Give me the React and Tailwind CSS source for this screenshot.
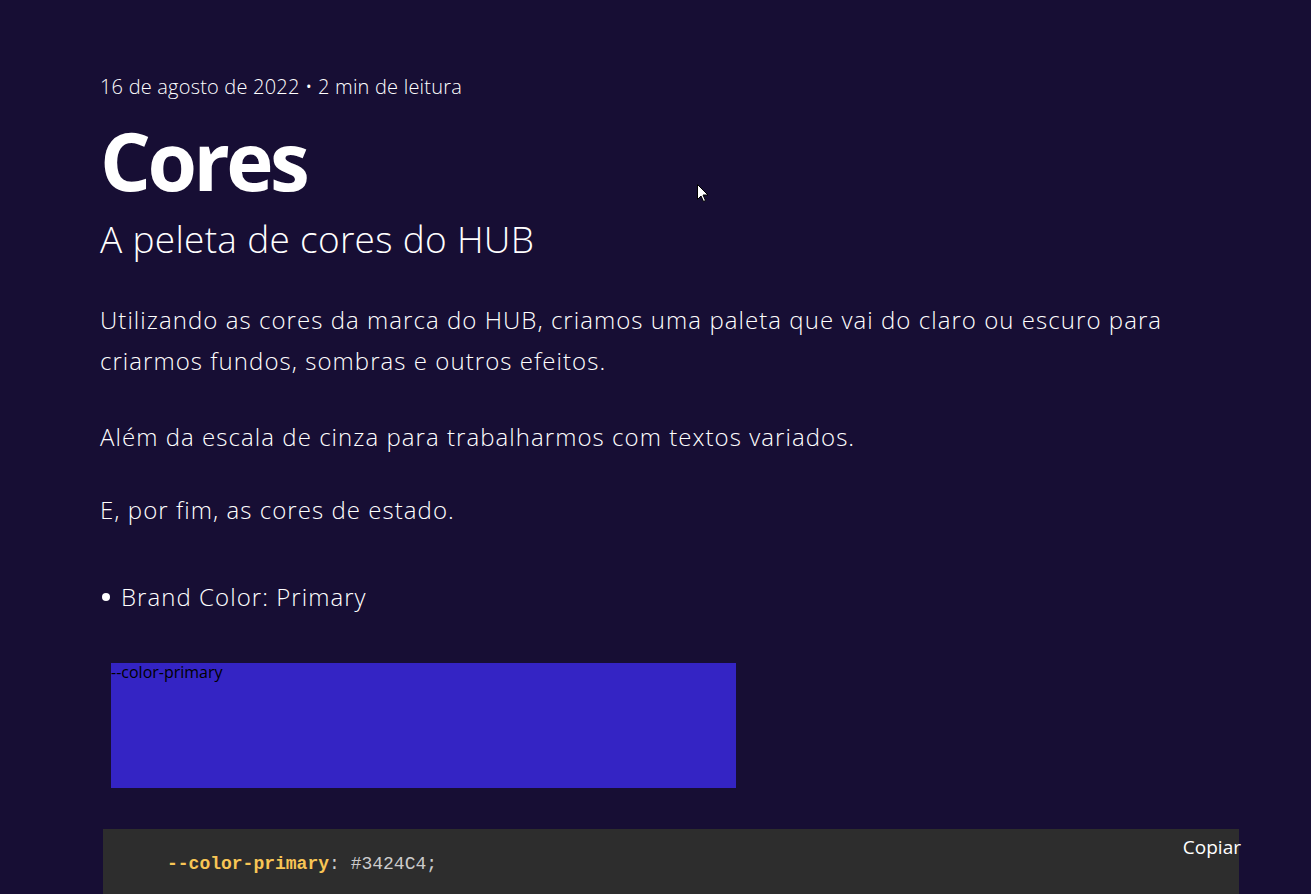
import React from 'react';

const font = { fontFamily: '"Open Sans", "Noto Sans", sans-serif' };

export default function App() {
    return (
        <div className="min-h-[894px] bg-[#170e34] text-white overflow-hidden relative" style={font}>
            <div className="w-[1136px] ml-[100px] pt-[74px]">
                <p className="text-[20px] font-light tracking-[0.2px] text-white leading-[26px]">
                    16 de agosto de 2022 • 2 min de leitura
                </p>
                <h1 className="text-[80px] font-bold leading-[96px] mt-[12px] tracking-[-3.5px]">Cores</h1>
                <h2 className="text-[37px] font-light tracking-[0.3px] leading-[48px] mt-[7px]">A peleta de cores do HUB</h2>

                <div className="w-[1111px] text-[24px] font-light tracking-[1.05px] leading-[41px] text-white">
                    <p className="mt-[36px]">
                        Utilizando as cores da marca do HUB, criamos uma paleta que vai do claro ou escuro para
                        criarmos fundos, sombras e outros efeitos.
                    </p>
                    <p className="mt-[35px]">Além da escala de cinza para trabalharmos com textos variados.</p>
                    <p className="mt-[32px]">E, por fim, as cores de estado.</p>
                    <ul className="mt-[46px]">
                        <li className="flex items-center">
                            <span className="w-[8px] h-[8px] rounded-full bg-white ml-[2px] mr-[11px]" />
                            Brand Color: Primary
                        </li>
                    </ul>
                </div>

                <div className="ml-[11px] mt-[46px] w-[625px] h-[125px] bg-[#3424c4]">
                    <span className="text-[16px] text-black leading-[18px] block">--color-primary</span>
                </div>

                <div className="ml-[3px] mt-[41px] w-[1136px] h-[100px] bg-[#2d2d2d] relative">
                    <pre
                        className="pt-[23px] pl-[64px] text-[18px] leading-[24px] text-[#cccccc]"
                        style={{ fontFamily: '"Liberation Mono", "DejaVu Sans Mono", monospace' }}
                    >
                        <span className="text-[#f8c555] font-bold">--color-primary</span>: #3424C4;
                    </pre>
                    <span className="absolute right-[-2px] top-[5px] text-[19px] leading-[26px] text-white">Copiar</span>
                </div>
            </div>

            <svg className="absolute left-[697px] top-[184px]" width="12" height="19" viewBox="0 0 12 19">
                <path d="M0.5 0.5 L0.5 15.5 L4 12 L6.5 17.5 L8.5 16.5 L6 11 L11 11 Z" fill="white" stroke="black" strokeWidth="1" />
            </svg>
        </div>
    );
}
